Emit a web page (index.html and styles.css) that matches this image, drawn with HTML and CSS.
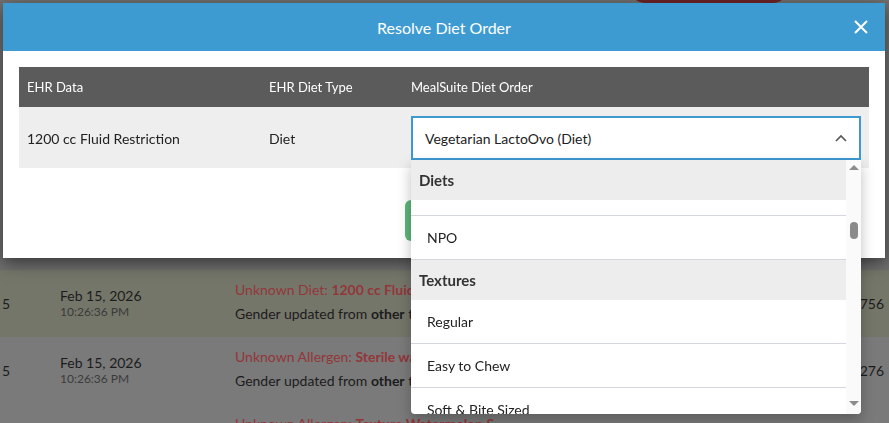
FILE: index.html
```html
<!DOCTYPE html>
<html lang="en">
<head>
    <meta charset="UTF-8">
    <meta name="viewport" content="width=device-width, initial-scale=1.0">
    <title>Resolve Diet Order</title>
    <link rel="stylesheet" href="styles.css">
</head>
<body>
    <!-- activity log underneath the dialog -->
    <div class="log">
        <div class="log-row log-row-top">
            <span class="top-btn"></span>
        </div>
        <div class="log-row warn">
            <div class="cell-num">5</div>
            <div class="cell-date">
                <div class="date">Feb 15, 2026</div>
                <div class="time">10:26:36 PM</div>
            </div>
            <div class="cell-msg">
                <div class="msg-err">Unknown Diet: <b>1200 cc Fluid Restriction</b></div>
                <div class="msg">Gender updated from <b>other</b> to <b>female</b></div>
            </div>
            <div class="cell-id">4756</div>
        </div>
        <div class="log-row">
            <div class="cell-num">5</div>
            <div class="cell-date">
                <div class="date">Feb 15, 2026</div>
                <div class="time">10:26:36 PM</div>
            </div>
            <div class="cell-msg">
                <div class="msg-err">Unknown Allergen: <b>Sterile water</b></div>
                <div class="msg">Gender updated from <b>other</b> to <b>female</b></div>
            </div>
            <div class="cell-id">4276</div>
        </div>
        <div class="log-row">
            <div class="cell-num">5</div>
            <div class="cell-date">
                <div class="date">Feb 15, 2026</div>
                <div class="time">10:26:36 PM</div>
            </div>
            <div class="cell-msg">
                <div class="msg-err">Unknown Allergen: <b>Texture Watermelon S</b></div>
            </div>
            <div class="cell-id"></div>
        </div>
    </div>

    <div class="modal">
        <div class="modal-header">
            <span></span>
            <h2 class="modal-title">Resolve Diet Order</h2>
            <button class="modal-close">
                <svg width="14" height="14" viewBox="0 0 14 14">
                    <path d="M1 1 L13 13 M13 1 L1 13" stroke="#fff" stroke-width="2" fill="none"/>
                </svg>
            </button>
        </div>
        <div class="modal-body">
            <table class="diet-table">
                <thead>
                    <tr>
                        <th class="col-data">EHR Data</th>
                        <th class="col-type">EHR Diet Type</th>
                        <th>MealSuite Diet Order</th>
                    </tr>
                </thead>
                <tbody>
                    <tr>
                        <td>1200 cc Fluid Restriction</td>
                        <td>Diet</td>
                        <td>
                            <div class="select-wrap">
                                <div class="select">
                                    <span>Vegetarian LactoOvo (Diet)</span>
                                    <svg width="12" height="8" viewBox="0 0 12 8">
                                        <polyline points="1,7 6,2 11,7" stroke="#555" stroke-width="1.6" fill="none"/>
                                    </svg>
                                </div>
                                <div class="dropdown">
                                    <div class="options">
                                        <div class="group">Diets</div>
                                        <div class="option option-cut"></div>
                                        <div class="option">NPO</div>
                                        <div class="group">Textures</div>
                                        <div class="option">Regular</div>
                                        <div class="option">Easy to Chew</div>
                                        <div class="option">Soft &amp; Bite Sized</div>
                                    </div>
                                    <div class="scrollbar">
                                        <span class="arrow-up"></span>
                                        <span class="thumb"></span>
                                        <span class="arrow-down"></span>
                                    </div>
                                </div>
                            </div>
                        </td>
                    </tr>
                </tbody>
            </table>
        </div>
        <div class="modal-footer">
            <button class="btn-save">Save</button>
        </div>
    </div>
</body>
</html>
```

FILE: styles.css
```css
body {
    font-family: Lato, "Open Sans", sans-serif;
    background-color: #7a7a7a;
    margin: 0;
    padding: 0;
    overflow: hidden;
    height: 423px;
}

/* log rows behind the dialog */
.log-row {
    display: grid;
    grid-template-columns: 58px 175px 1fr 60px;
    padding: 0 5px 0 2px;
    height: 67px;
    color: #1c1c1c;
    font-size: 14px;
}
.log-row-top {
    display: flow-root;
    height: 270px;
    background-color: #6f6f6f;
}
.top-btn {
    display: block;
    margin: -33px 0 0 626px;
    width: 162px;
    height: 36px;
    border-radius: 18px;
    background-color: #6b2327;
}
.warn {
    background-color: #75766a;
}
.cell-num, .cell-id {
    align-self: center;
}
.cell-id {
    text-align: right;
}
.cell-date {
    padding-top: 17px;
}
.date {
    line-height: 18px;
}
.time {
    font-size: 12px;
    line-height: 14px;
    color: #3a3a3a;
}
.cell-msg {
    padding-top: 10px;
    white-space: nowrap;
}
.msg-err {
    line-height: 20px;
    color: #933639;
    margin-bottom: 4px;
}
.msg {
    line-height: 20px;
}

/* dialog */
.modal {
    position: fixed;
    top: 3px;
    left: 3px;
    width: 882px;
    background-color: #fff;
    box-shadow: 0 5px 15px rgba(0, 0, 0, 0.5);
}
.modal-header {
    display: grid;
    grid-template-columns: 1fr auto 1fr;
    align-items: center;
    height: 48px;
    background-color: #3e9bd2;
    padding-right: 17px;
}
.modal-title {
    margin: 0;
    padding-left: 17px;
    font-size: 16px;
    font-weight: normal;
    color: #fff;
}
.modal-close {
    justify-self: end;
    display: flex;
    padding: 0;
    border: none;
    background: none;
    cursor: pointer;
}
.modal-body {
    padding: 16px 16px 0;
}
.diet-table {
    width: 100%;
    border-collapse: collapse;
}
.diet-table th {
    height: 40px;
    padding: 0 8px;
    background-color: #5b5b5b;
    color: #fff;
    font-size: 13px;
    font-weight: normal;
    text-align: left;
}
.diet-table .col-data {
    width: 226px;
}
.diet-table .col-type {
    width: 126px;
}
.diet-table td {
    height: 61px;
    box-sizing: border-box;
    padding: 9px 8px 8px;
    background-color: #eeeeee;
    color: #222;
    font-size: 14px;
}
.select-wrap {
    position: relative;
}
.select {
    display: flex;
    align-items: center;
    justify-content: space-between;
    box-sizing: border-box;
    height: 44px;
    padding: 0 12px 0 12px;
    border: 2px solid #3d9ad1;
    background-color: #fff;
    color: #222;
}
.dropdown {
    position: absolute;
    top: 44px;
    left: 0;
    right: 0;
    height: 254px;
    display: flex;
    background-color: #fff;
    border-radius: 0 0 4px 4px;
    box-shadow: 0 6px 14px rgba(0, 0, 0, 0.25);
    overflow: hidden;
    z-index: 2;
}
.options {
    flex: 1;
    overflow: hidden;
}
.group {
    height: 40px;
    line-height: 40px;
    padding-left: 8px;
    background-color: #ededed;
    color: #333;
    font-size: 15px;
    font-weight: bold;
}
.option {
    height: 43px;
    line-height: 43px;
    padding-left: 16px;
    border-bottom: 1px solid #d3d6dd;
    color: #222;
    font-size: 14px;
}
.option-cut {
    height: 15px;
}
.scrollbar {
    position: relative;
    width: 15px;
    background-color: #fafafa;
}
.arrow-up, .arrow-down {
    position: absolute;
    left: 3px;
    width: 0;
    height: 0;
    border-left: 5px solid transparent;
    border-right: 5px solid transparent;
}
.arrow-up {
    top: 5px;
    border-bottom: 5px solid #8c8c8c;
}
.arrow-down {
    bottom: 8px;
    border-top: 5px solid #8c8c8c;
}
.thumb {
    position: absolute;
    top: 62px;
    left: 4px;
    width: 8px;
    height: 17px;
    border-radius: 4px;
    background-color: #8a8a8a;
}
.modal-footer {
    text-align: center;
    padding: 32px 0 17px;
}
.btn-save {
    width: 78px;
    height: 41px;
    border: none;
    border-radius: 6px;
    background-color: #5db579;
    color: #fff;
    font-family: Lato, sans-serif;
    font-size: 14px;
    vertical-align: top;
}
```
